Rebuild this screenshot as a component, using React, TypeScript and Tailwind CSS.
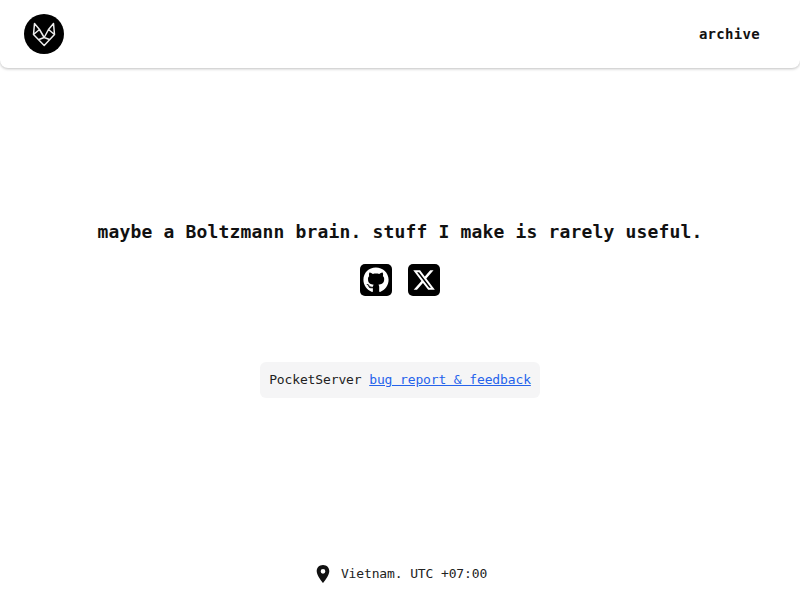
import { FaGithub } from "react-icons/fa";

const mono = "font-['DejaVu_Sans_Mono','Liberation_Mono',monospace]";

function Logo() {
  return (
    <svg width="40" height="40" viewBox="0 0 40 40" className="block">
      <circle cx="20" cy="20" r="20" fill="#000" />
      <path
        d="M10.500 9.500 L9.500 20.500 L20.200 31.500 L30.500 20.500 L29.500 9.500 L24.500 15.500 L20.200 23.500 L15.500 15.500 Z M9.500 20.500 L15.500 15.500 M30.500 20.500 L24.500 15.500 M15 25.500 L20.200 23.500 L25.500 25.500"
        fill="none"
        stroke="#ececec"
        strokeWidth="1.5"
        strokeLinejoin="round"
      />
    </svg>
  );
}

function XIcon() {
  return (
    <svg width="24" height="24" viewBox="0 0 24 24" fill="#fff">
      <path d="M18.244 2.25h3.308l-7.227 8.26 8.502 11.24H16.17l-5.214-6.817L4.99 21.75H1.68l7.73-8.835L1.254 2.25H8.08l4.713 6.231zm-1.161 17.52h1.833L7.084 4.126H5.117z" />
    </svg>
  );
}

export default function App() {
  return (
    <div className={`flex min-h-[600px] flex-col bg-white text-[#111] ${mono}`}>
      <header className="flex h-[68px] items-center justify-between rounded-b-[8px] pl-6 pr-10 shadow-[0_1px_3px_rgba(0,0,0,0.25)]">
        <Logo />
        <a className="text-[14px] font-bold tracking-[0.3px]">archive</a>
      </header>
      <main className="flex flex-col items-center">
        <h1 className="mt-[152px] text-[18px] leading-6 font-bold tracking-[0.16px]">
          maybe a Boltzmann brain. stuff I make is rarely useful.
        </h1>
        <div className="mt-[20px] flex gap-4">
          <span className="flex h-8 w-8 items-center justify-center rounded-[5px] bg-black text-white">
            <FaGithub size={26} />
          </span>
          <span className="flex h-8 w-8 items-center justify-center rounded-[5px] bg-black">
            <XIcon />
          </span>
        </div>
        <div className="mt-[66px] flex h-9 w-[280px] items-center justify-center rounded-[6px] bg-[#f5f5f6] text-[13px] tracking-[-0.13px] text-[#222]">
          <span className="whitespace-pre">PocketServer </span>
          <a className="text-[#2563eb] underline">bug report &amp; feedback</a>
        </div>
      </main>
      <footer className="mt-[166px] ml-[2px] flex items-center justify-center gap-[10px] text-[13px] tracking-[-0.13px] text-[#222]">
        <svg width="16" height="18" viewBox="0 0 16 20" fill="#111">
          <path fillRule="evenodd" d="M8 0C3.6 0 1 3.2 1 7c0 5 7 13 7 13s7-8 7-13c0-3.8-2.6-7-7-7zm0 9.6A2.6 2.6 0 1 1 8 4.400a2.600 2.600 0 0 1 0 5.200z" />
        </svg>
        <span>Vietnam. UTC +07:00</span>
      </footer>
    </div>
  );
}
